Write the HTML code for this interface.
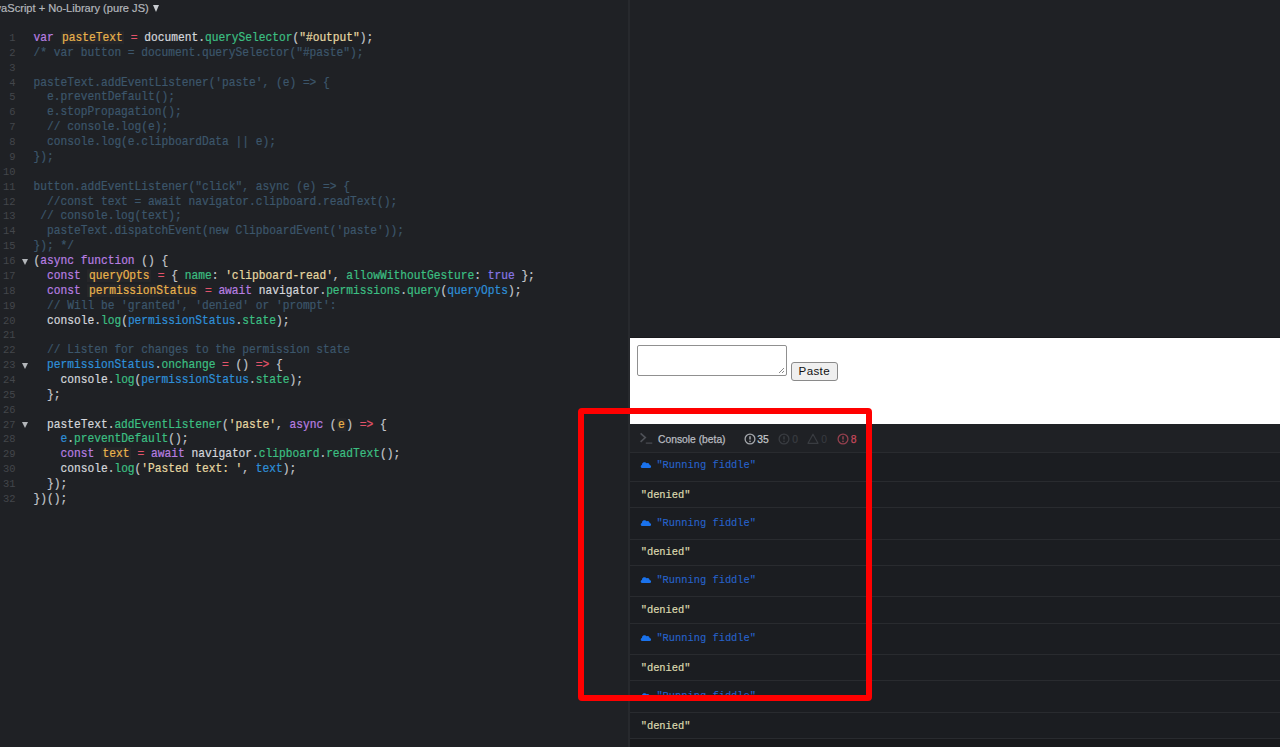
<!DOCTYPE html>
<html><head><meta charset="utf-8"><style>
html,body{margin:0;padding:0}
body{width:1280px;height:747px;overflow:hidden;position:relative;background:#1f2125;font-family:"Liberation Sans",sans-serif}
.a{position:absolute}
.code{position:absolute;-webkit-text-stroke:0.2px currentColor;transform-origin:0 10.4px;transform:scaleY(1.07);left:33.6px;font-family:"Liberation Mono",monospace;font-size:11.233px;white-space:pre;line-height:14.87px;height:14.87px}
.ln{position:absolute;left:0;transform-origin:0 10.2px;transform:scaleY(1.1);width:15.6px;text-align:right;font-family:"Liberation Mono",monospace;font-size:10.4px;color:#43464b;line-height:14.87px;white-space:pre}
.fold{position:absolute;left:22.2px;width:0;height:0;border-left:3px solid transparent;border-right:3px solid transparent;border-top:6.2px solid #b3b6ba}
.kw{color:#b77ee0}.def,.defh{color:#e8b24c}.op{color:#e2536a}.var{color:#d3d6db}.prop{color:#3cbf82}.str{color:#e6d8a2}.vu{color:#2e8fd8}.p{color:#c2c5ca}.cm{color:#3c566b}.bool{color:#8877e6}
.defh{background:rgba(255,235,190,0.03);padding:0 1.5px}
.row{position:absolute;-webkit-text-stroke:0.2px currentColor;left:630px;width:650px;font-family:"Liberation Mono",monospace;font-size:10.38px;white-space:pre}
.hl{position:absolute;left:630px;width:650px;height:1px;background:#292b2f}
.hld{position:absolute;left:630px;width:650px;height:1px;background:#17181b}
</style></head><body>

<div class="a" style="right:1131.25px;top:1px;font-size:11.1px;-webkit-text-stroke:0.2px currentColor;line-height:14px;color:#b3b6bb;white-space:nowrap">JavaScript + No-Library (pure JS)</div>
<div class="a" style="left:152.5px;top:4.5px;width:0;height:0;border-left:3.75px solid transparent;border-right:3.75px solid transparent;border-top:7px solid #c9ccd0"></div>
<div class="ln" style="top:31.00px">1</div>
<div class="code" style="top:31.00px"><span class="kw">var</span><span class="p"> </span><span class="defh">pasteText</span><span class="p"> </span><span class="op">=</span><span class="p"> </span><span class="var">document</span><span class="p">.</span><span class="prop">querySelector</span><span class="p">(</span><span class="str">"#output"</span><span class="p">);</span></div>
<div class="ln" style="top:45.87px">2</div>
<div class="code" style="top:45.87px"><span class="cm">/* var button = document.querySelector("#paste");</span></div>
<div class="ln" style="top:60.74px">3</div>
<div class="code" style="top:60.74px"></div>
<div class="ln" style="top:75.61px">4</div>
<div class="code" style="top:75.61px"><span class="cm">pasteText.addEventListener('paste', (e) =&gt; {</span></div>
<div class="ln" style="top:90.48px">5</div>
<div class="code" style="top:90.48px"><span class="cm">  e.preventDefault();</span></div>
<div class="ln" style="top:105.35px">6</div>
<div class="code" style="top:105.35px"><span class="cm">  e.stopPropagation();</span></div>
<div class="ln" style="top:120.22px">7</div>
<div class="code" style="top:120.22px"><span class="cm">  // console.log(e);</span></div>
<div class="ln" style="top:135.09px">8</div>
<div class="code" style="top:135.09px"><span class="cm">  console.log(e.clipboardData || e);</span></div>
<div class="ln" style="top:149.96px">9</div>
<div class="code" style="top:149.96px"><span class="cm">});</span></div>
<div class="ln" style="top:164.83px">10</div>
<div class="code" style="top:164.83px"></div>
<div class="ln" style="top:179.70px">11</div>
<div class="code" style="top:179.70px"><span class="cm">button.addEventListener("click", async (e) =&gt; {</span></div>
<div class="ln" style="top:194.57px">12</div>
<div class="code" style="top:194.57px"><span class="cm">  //const text = await navigator.clipboard.readText();</span></div>
<div class="ln" style="top:209.44px">13</div>
<div class="code" style="top:209.44px"><span class="cm"> // console.log(text);</span></div>
<div class="ln" style="top:224.31px">14</div>
<div class="code" style="top:224.31px"><span class="cm">  pasteText.dispatchEvent(new ClipboardEvent('paste'));</span></div>
<div class="ln" style="top:239.18px">15</div>
<div class="code" style="top:239.18px"><span class="cm">}); */</span></div>
<div class="ln" style="top:254.05px">16</div>
<div class="fold" style="top:258.65px"></div>
<div class="code" style="top:254.05px"><span class="p">(</span><span class="kw">async</span><span class="p"> </span><span class="kw">function</span><span class="p"> () {</span></div>
<div class="ln" style="top:268.92px">17</div>
<div class="code" style="top:268.92px"><span class="p">  </span><span class="kw">const</span><span class="p"> </span><span class="defh">queryOpts</span><span class="p"> </span><span class="op">=</span><span class="p"> { </span><span class="prop">name</span><span class="p">: </span><span class="str">'clipboard-read'</span><span class="p">, </span><span class="prop">allowWithoutGesture</span><span class="p">: </span><span class="bool">true</span><span class="p"> };</span></div>
<div class="ln" style="top:283.79px">18</div>
<div class="code" style="top:283.79px"><span class="p">  </span><span class="kw">const</span><span class="p"> </span><span class="defh">permissionStatus</span><span class="p"> </span><span class="op">=</span><span class="p"> </span><span class="kw">await</span><span class="p"> </span><span class="var">navigator</span><span class="p">.</span><span class="prop">permissions</span><span class="p">.</span><span class="prop">query</span><span class="p">(</span><span class="vu">queryOpts</span><span class="p">);</span></div>
<div class="ln" style="top:298.66px">19</div>
<div class="code" style="top:298.66px"><span class="p">  </span><span class="cm">// Will be 'granted', 'denied' or 'prompt':</span></div>
<div class="ln" style="top:313.53px">20</div>
<div class="code" style="top:313.53px"><span class="p">  </span><span class="var">console</span><span class="p">.</span><span class="prop">log</span><span class="p">(</span><span class="vu">permissionStatus</span><span class="p">.</span><span class="prop">state</span><span class="p">);</span></div>
<div class="ln" style="top:328.40px">21</div>
<div class="code" style="top:328.40px"></div>
<div class="ln" style="top:343.27px">22</div>
<div class="code" style="top:343.27px"><span class="p">  </span><span class="cm">// Listen for changes to the permission state</span></div>
<div class="ln" style="top:358.14px">23</div>
<div class="fold" style="top:362.74px"></div>
<div class="code" style="top:358.14px"><span class="p">  </span><span class="vu">permissionStatus</span><span class="p">.</span><span class="prop">onchange</span><span class="p"> </span><span class="op">=</span><span class="p"> () </span><span class="op">=&gt;</span><span class="p"> {</span></div>
<div class="ln" style="top:373.01px">24</div>
<div class="code" style="top:373.01px"><span class="p">    </span><span class="var">console</span><span class="p">.</span><span class="prop">log</span><span class="p">(</span><span class="vu">permissionStatus</span><span class="p">.</span><span class="prop">state</span><span class="p">);</span></div>
<div class="ln" style="top:387.88px">25</div>
<div class="code" style="top:387.88px"><span class="p">  };</span></div>
<div class="ln" style="top:402.75px">26</div>
<div class="code" style="top:402.75px"></div>
<div class="ln" style="top:417.62px">27</div>
<div class="fold" style="top:422.22px"></div>
<div class="code" style="top:417.62px"><span class="p">  </span><span class="var">pasteText</span><span class="p">.</span><span class="prop">addEventListener</span><span class="p">(</span><span class="str">'paste'</span><span class="p">, </span><span class="kw">async</span><span class="p"> (</span><span class="defh">e</span><span class="p">) </span><span class="op">=&gt;</span><span class="p"> {</span></div>
<div class="ln" style="top:432.49px">28</div>
<div class="code" style="top:432.49px"><span class="p">    </span><span class="vu">e</span><span class="p">.</span><span class="prop">preventDefault</span><span class="p">();</span></div>
<div class="ln" style="top:447.36px">29</div>
<div class="code" style="top:447.36px"><span class="p">    </span><span class="kw">const</span><span class="p"> </span><span class="defh">text</span><span class="p"> </span><span class="op">=</span><span class="p"> </span><span class="kw">await</span><span class="p"> </span><span class="var">navigator</span><span class="p">.</span><span class="prop">clipboard</span><span class="p">.</span><span class="prop">readText</span><span class="p">();</span></div>
<div class="ln" style="top:462.23px">30</div>
<div class="code" style="top:462.23px"><span class="p">    </span><span class="var">console</span><span class="p">.</span><span class="prop">log</span><span class="p">(</span><span class="str">'Pasted text: '</span><span class="p">, </span><span class="vu">text</span><span class="p">);</span></div>
<div class="ln" style="top:477.10px">31</div>
<div class="code" style="top:477.10px"><span class="p">  });</span></div>
<div class="ln" style="top:491.97px">32</div>
<div class="code" style="top:491.97px"><span class="p">})();</span></div>
<div class="a" style="left:628px;top:0;width:2px;height:747px;background:#27292d"></div>
<div class="a" style="left:630px;top:337px;width:650px;height:1px;background:#18191c"></div>
<div class="a" style="left:630px;top:338px;width:650px;height:86px;background:#ffffff"></div>
<div class="a" style="left:637px;top:345px;width:148px;height:28.5px;border:1px solid #909090;border-radius:2px;background:#fff"></div>
<svg class="a" style="left:777px;top:366px" width="8" height="8" viewBox="0 0 8 8"><path d="M7 2 L2 7 M7 5 L5 7" stroke="#8a8a8a" stroke-width="1"/></svg>
<div class="a" style="left:791px;top:361.5px;width:44.5px;height:17.5px;border:1px solid #8a8a8a;border-radius:3px;background:#efefef;font-size:11.6px;letter-spacing:0.35px;line-height:16px;text-align:center;color:#111">Paste</div>
<div class="a" style="left:630px;top:424px;width:650px;height:323px;background:#1b1d21"></div>
<div class="a" style="left:630px;top:424px;width:650px;height:28px;background:#1f2125"></div>
<div class="a" style="left:658px;top:432.8px;font-size:10.3px;-webkit-text-stroke:0.25px currentColor;line-height:13px;color:#b8bbc0;white-space:nowrap">Console (beta)</div>
<svg class="a" style="left:638px;top:430px" width="18" height="16" viewBox="0 0 18 16"><path d="M2.6 3.4 L7.3 7.6 L2.6 11.8" fill="none" stroke="#4e5157" stroke-width="1.6"/><path d="M7.8 13.1 H14.3" stroke="#4e5157" stroke-width="1.1"/></svg>
<svg class="a" style="left:743.7px;top:432.9px" width="12" height="12" viewBox="0 0 12 12"><circle cx="6" cy="6" r="4.9" fill="none" stroke="#a3a6ab" stroke-width="1.3"/><path d="M6 3.3 V6.6" stroke="#a3a6ab" stroke-width="1.5"/><circle cx="6" cy="8.4" r="0.8" fill="#a3a6ab"/></svg>
<div class="a" style="left:757.3px;top:432.6px;font-size:10.3px;-webkit-text-stroke:0.25px currentColor;line-height:13px;color:#c3c6ca;white-space:nowrap">35</div>
<svg class="a" style="left:778.2px;top:432.9px" width="12" height="12" viewBox="0 0 12 12"><circle cx="6" cy="6" r="4.9" fill="none" stroke="#393c41" stroke-width="1.3"/><path d="M6 3.3 V6.6" stroke="#393c41" stroke-width="1.5"/><circle cx="6" cy="8.4" r="0.8" fill="#393c41"/></svg>
<div class="a" style="left:792.3px;top:432.6px;font-size:10.3px;-webkit-text-stroke:0.25px currentColor;line-height:13px;color:#393c41;white-space:nowrap">0</div>
<svg class="a" style="left:807px;top:432.6px" width="12" height="12" viewBox="0 0 12 12"><path d="M6 1.2 L11 10.3 H1 Z" fill="none" stroke="#393c41" stroke-width="1.2" stroke-linejoin="round"/></svg>
<div class="a" style="left:821.2px;top:432.6px;font-size:10.3px;line-height:13px;color:#393c41;white-space:nowrap">0</div>
<svg class="a" style="left:836.7px;top:432.9px" width="12" height="12" viewBox="0 0 12 12"><circle cx="6" cy="6" r="4.9" fill="none" stroke="#94404e" stroke-width="1.3"/><path d="M6 3.3 V6.6" stroke="#94404e" stroke-width="1.5"/><circle cx="6" cy="8.4" r="0.8" fill="#94404e"/></svg>
<div class="a" style="left:850.7px;top:432.6px;font-size:10.3px;-webkit-text-stroke:0.25px currentColor;line-height:13px;color:#c6485a;white-space:nowrap">8</div>
<div class="hl" style="top:452px"></div>
<div class="hl" style="top:481px"></div>
<div class="hl" style="top:507px"></div>
<div class="hl" style="top:539px"></div>
<div class="hl" style="top:565px"></div>
<div class="hl" style="top:596px"></div>
<div class="hl" style="top:623px"></div>
<div class="hl" style="top:654px"></div>
<div class="hl" style="top:680px"></div>
<div class="hl" style="top:712px"></div>
<div class="hl" style="top:738px"></div>
<div class="a" style="left:630px;top:739px;width:650px;height:8px;background:#18191c"></div>
<div class="row" style="left:656.4px;top:459.00px;line-height:12px;color:#2763cc;width:auto;-webkit-text-stroke:0.1px currentColor">"Running fiddle"</div>
<svg class="a" style="left:640px;top:460.80px" width="12" height="8" viewBox="0 0 12 8"><path d="M1.9 7 A1.6 1.6 0 0 1 1.9 3.9 A2.6 2.6 0 0 1 6.6 2.3 A2 2 0 0 1 9.6 4 A1.5 1.5 0 0 1 9.6 7 Z" fill="#1a72ec"/></svg>
<div class="row" style="left:656.4px;top:516.70px;line-height:12px;color:#2763cc;width:auto;-webkit-text-stroke:0.1px currentColor">"Running fiddle"</div>
<svg class="a" style="left:640px;top:518.50px" width="12" height="8" viewBox="0 0 12 8"><path d="M1.9 7 A1.6 1.6 0 0 1 1.9 3.9 A2.6 2.6 0 0 1 6.6 2.3 A2 2 0 0 1 9.6 4 A1.5 1.5 0 0 1 9.6 7 Z" fill="#1a72ec"/></svg>
<div class="row" style="left:656.4px;top:574.40px;line-height:12px;color:#2763cc;width:auto;-webkit-text-stroke:0.1px currentColor">"Running fiddle"</div>
<svg class="a" style="left:640px;top:576.20px" width="12" height="8" viewBox="0 0 12 8"><path d="M1.9 7 A1.6 1.6 0 0 1 1.9 3.9 A2.6 2.6 0 0 1 6.6 2.3 A2 2 0 0 1 9.6 4 A1.5 1.5 0 0 1 9.6 7 Z" fill="#1a72ec"/></svg>
<div class="row" style="left:656.4px;top:632.10px;line-height:12px;color:#2763cc;width:auto;-webkit-text-stroke:0.1px currentColor">"Running fiddle"</div>
<svg class="a" style="left:640px;top:633.90px" width="12" height="8" viewBox="0 0 12 8"><path d="M1.9 7 A1.6 1.6 0 0 1 1.9 3.9 A2.6 2.6 0 0 1 6.6 2.3 A2 2 0 0 1 9.6 4 A1.5 1.5 0 0 1 9.6 7 Z" fill="#1a72ec"/></svg>
<div class="row" style="left:656.4px;top:689.80px;line-height:12px;color:#2763cc;width:auto;-webkit-text-stroke:0.1px currentColor">"Running fiddle"</div>
<svg class="a" style="left:640px;top:691.60px" width="12" height="8" viewBox="0 0 12 8"><path d="M1.9 7 A1.6 1.6 0 0 1 1.9 3.9 A2.6 2.6 0 0 1 6.6 2.3 A2 2 0 0 1 9.6 4 A1.5 1.5 0 0 1 9.6 7 Z" fill="#1a72ec"/></svg>
<div class="row" style="left:640.7px;top:488.70px;line-height:12px;color:#dcd8ae;width:auto">"denied"</div>
<div class="row" style="left:640.7px;top:546.40px;line-height:12px;color:#dcd8ae;width:auto">"denied"</div>
<div class="row" style="left:640.7px;top:604.10px;line-height:12px;color:#dcd8ae;width:auto">"denied"</div>
<div class="row" style="left:640.7px;top:661.80px;line-height:12px;color:#dcd8ae;width:auto">"denied"</div>
<div class="row" style="left:640.7px;top:719.50px;line-height:12px;color:#dcd8ae;width:auto">"denied"</div>
<div class="a" style="left:578px;top:408px;width:282px;height:280.5px;border:6px solid #ff0000;border-radius:4px"></div>
</body></html>
